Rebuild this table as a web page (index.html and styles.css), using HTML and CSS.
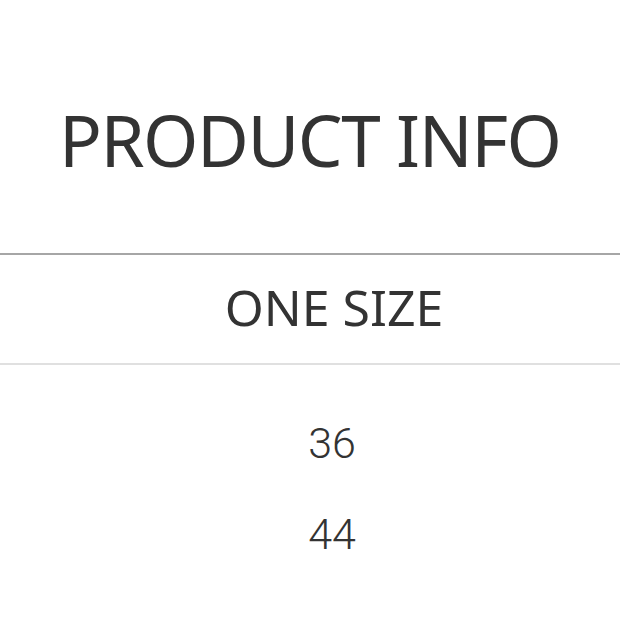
FILE: index.html
```html
<!DOCTYPE html>
<html>
<head>
<meta charset="utf-8">
<link rel="stylesheet" href="styles.css">
</head>
<body>
<div class="page">
  <h1 class="title">PRODUCT INFO</h1>
  <div class="table">
    <div class="head">ONE SIZE</div>
    <div class="rows">
      <div class="cell">36</div>
      <div class="cell">44</div>
    </div>
  </div>
</div>
</body>
</html>
```
FILE: styles.css
```css
html, body {
  margin: 0;
  padding: 0;
  background: #ffffff;
}
.page {
  width: 620px;
  height: 620px;
  overflow: hidden;
}
.title {
  margin: 0;
  padding: 104px 0 0 59px;
  font-family: "Noto Sans", sans-serif;
  font-weight: 400;
  font-size: 71px;
  line-height: 1;
  letter-spacing: -1.5px;
  color: #333333;
  white-space: nowrap;
}
.table {
  margin-top: 78px;
  border-top: 2px solid #a6a6a6;
}
.head {
  padding: 27px 0 31px 48px;
  border-bottom: 2px solid #e0e0e0;
  text-align: center;
  font-family: "Noto Sans", sans-serif;
  font-size: 50px;
  line-height: 1;
  color: #333333;
}
.rows {
  padding: 57px 0 0 44px;
  display: flex;
  flex-direction: column;
  gap: 48px;
}
.cell {
  text-align: center;
  font-family: "Roboto", sans-serif;
  font-weight: 300;
  font-size: 43px;
  line-height: 1;
  color: #333333;
}
```
